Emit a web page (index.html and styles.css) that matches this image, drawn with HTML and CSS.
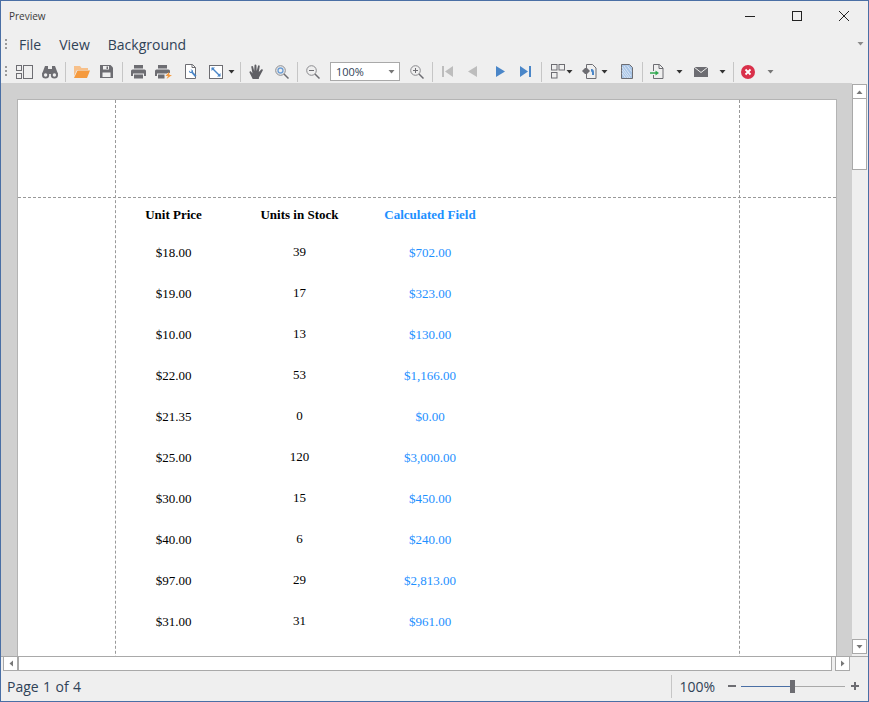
FILE: index.html
```html
<!DOCTYPE html>
<html lang="en">
<head>
<meta charset="utf-8">
<title>Preview</title>
<link rel="stylesheet" href="styles.css">
</head>
<body>
<div class="window">
  <header class="titlebar">
    <span class="title">Preview</span>
    <div class="winbtns">
      <button class="winbtn"><svg width="12" height="12" viewBox="0 0 12 12"><path d="M1 6.5h10" stroke="#222" fill="none"/></svg></button>
      <button class="winbtn"><svg width="12" height="12" viewBox="0 0 12 12"><rect x="1.5" y="1.5" width="9" height="9" stroke="#222" fill="none"/></svg></button>
      <button class="winbtn"><svg width="12" height="12" viewBox="0 0 12 12"><path d="M1 1l10 10M11 1L1 11" stroke="#222" fill="none"/></svg></button>
    </div>
  </header>
  <nav class="menubar">
    <span class="grip"></span>
    <span class="menuitem m-file">File</span>
    <span class="menuitem m-view">View</span>
    <span class="menuitem">Background</span>
    <span class="spring"></span>
    <svg class="menucaret" width="7" height="4" viewBox="0 0 7 4"><path d="M.5 0h6L3.500 3.500z" fill="#8a8a8a"/></svg>
  </nav>
  <div class="toolbar">
    <span class="grip"></span>
    <span class="tool t1"><svg width="17" height="14" viewBox="0 0 17 14"><g fill="none" stroke="#6d6d72"><rect x=".5" y=".5" width="5" height="5"/><rect x=".5" y="8.5" width="5" height="5"/><rect x="7.5" y=".5" width="9" height="13"/></g></svg></span>
    <span class="tool"><svg width="16" height="14" viewBox="0 0 16 14"><g fill="#6d6d72"><path d="M3 1h3v3h4V1h3l3 8H0z"/><circle cx="3.6" cy="10" r="3.6"/><circle cx="12.4" cy="10" r="3.6"/></g><circle cx="3.6" cy="10" r="1.7" fill="#efefef"/><circle cx="12.4" cy="10" r="1.7" fill="#efefef"/></svg></span>
    <span class="sep"></span>
    <span class="tool"><svg width="16" height="13" viewBox="0 0 16 13"><path d="M0 1h6l1.500 2H14v2H3L0 11z" fill="#f7c08a"/><path d="M3.500 5.500H16L13 13H0z" fill="#f59a3e"/></svg></span>
    <span class="tool"><svg width="13" height="13" viewBox="0 0 13 13"><path d="M0 0h10.500L13 2.500V13H0z" fill="#6d6d72"/><rect x="3" y="1" width="6" height="3.500" fill="#efefef"/><rect x="6.500" y="1.500" width="1.500" height="2.500" fill="#6d6d72"/><rect x="2.500" y="7.500" width="8" height="4.500" fill="#efefef"/></svg></span>
    <span class="sep"></span>
    <span class="tool"><svg width="15" height="14" viewBox="0 0 15 14"><path d="M3 0h9v3.500H3z" fill="#6d6d72"/><path d="M1.500 4.500h12A1.500 1.500 0 0 1 15 6v5h-2V8.500H2V11H0V6a1.500 1.500 0 0 1 1.500-1.500z" fill="#6d6d72"/><rect x="3" y="9.500" width="9" height="4" fill="#6d6d72"/></svg></span>
    <span class="tool"><svg width="17" height="14" viewBox="0 0 17 14"><path d="M3 0h9v3.500H3z" fill="#6d6d72"/><path d="M1.500 4.500h12A1.500 1.500 0 0 1 15 6v2h-3v.5H2V11H0V6a1.500 1.500 0 0 1 1.500-1.500z" fill="#6d6d72"/><rect x="3" y="9.500" width="6.500" height="4" fill="#6d6d72"/><path d="M14 7l-3.500 4H13l-1.500 3L17 10h-2.500z" fill="#f59a3e"/></svg></span>
    <span class="tool t-c"><svg width="14" height="15" viewBox="0 0 14 15"><path d="M1.500.5h7L11.500 3.500V14.500H1.500z" fill="#fff" stroke="#6d6d72"/><path d="M8 .5v3h3.500" fill="none" stroke="#6d6d72"/><path d="M5 6.500a2 2 0 0 0 2.500 2.500L11 13l1.500-1.500L9 8a2 2 0 0 0-2.500-2.500L8 7 6.500 8z" fill="#4a86c8"/></svg></span>
    <span class="tool"><svg width="14" height="14" viewBox="0 0 14 14"><rect x=".5" y=".5" width="13" height="13" fill="#fff" stroke="#6d6d72"/><path d="M3 3l8 8" stroke="#4a86c8" stroke-width="1.400"/><path d="M2.500 2.500h3.500L2.500 6zM11.500 11.500H8L11.500 8z" fill="#4a86c8"/></svg></span>
    <svg class="caret c-d" width="7" height="4" viewBox="0 0 7 4"><path d="M.5 0h6L3.500 3.500z" fill="#333"/></svg>
    <span class="sep s-hand"></span>
    <span class="tool"><svg width="16" height="16" viewBox="0 0 16 16"><path d="M3.700 15L.5 8.500c-.4-1 1-1.700 1.700-.7L3.500 9.500 2.300 3c-.2-1.100 1.500-1.500 1.800-.3L5.200 7 5.500 1.300c0-1.200 1.800-1.200 1.900 0L7.700 7 9 2c.3-1.100 2-.8 1.700.4L9.800 8l2.400-2.400c.9-.9 2.200.2 1.400 1.200L10 13.500 9.800 15z" fill="#5f5f64"/></svg></span>
    <span class="tool"><svg width="14" height="14" viewBox="0 0 14 14"><circle cx="5.500" cy="5.500" r="4.800" fill="none" stroke="#8a8a8e"/><circle cx="5.500" cy="5.500" r="2.500" fill="none" stroke="#6f9fd4" stroke-width="1.400"/><path d="M9 9l4.500 4.500" stroke="#6d6d72" stroke-width="1.500"/></svg></span>
    <span class="sep"></span>
    <span class="tool t-zo"><svg width="14" height="14" viewBox="0 0 14 14"><circle cx="5.500" cy="5.500" r="4.800" fill="none" stroke="#8a8a8e"/><path d="M3 5.500h5" stroke="#6d6d72"/><path d="M9 9l4.500 4.500" stroke="#6d6d72" stroke-width="1.500"/></svg></span>
    <span class="combo"><span class="comboval">100%</span><svg width="7" height="4" viewBox="0 0 7 4"><path d="M.5 0h6L3.500 3.500z" fill="#777"/></svg></span>
    <span class="tool"><svg width="14" height="14" viewBox="0 0 14 14"><circle cx="5.500" cy="5.500" r="4.800" fill="none" stroke="#8a8a8e"/><path d="M3 5.500h5M5.500 3v5" stroke="#6d6d72"/><path d="M9 9l4.500 4.500" stroke="#6d6d72" stroke-width="1.500"/></svg></span>
    <span class="sep"></span>
    <span class="tool t-first"><svg width="11" height="11" viewBox="0 0 11 11"><path d="M0 0h2v11H0zM11 0v11L3 5.500z" fill="#bdbdbd"/></svg></span>
    <span class="tool"><svg width="9" height="11" viewBox="0 0 9 11"><path d="M9 0v11L0 5.500z" fill="#bdbdbd"/></svg></span>
    <span class="tool t-next"><svg width="9" height="11" viewBox="0 0 9 11"><path d="M0 0v11l9-5.500z" fill="#4a86c8"/></svg></span>
    <span class="tool"><svg width="11" height="11" viewBox="0 0 11 11"><path d="M9 0h2v11H9zM0 0v11l8-5.500z" fill="#4a86c8"/></svg></span>
    <span class="sep"></span>
    <span class="tool"><svg width="14" height="15" viewBox="0 0 14 15"><g fill="none" stroke="#6d6d72"><rect x=".5" y=".5" width="5.500" height="5.500"/><rect x="8" y=".5" width="5.500" height="5.500"/><rect x=".5" y="8.500" width="5.500" height="5.500"/></g></svg></span>
    <svg class="caret c-e" width="7" height="4" viewBox="0 0 7 4"><path d="M.5 0h6L3.500 3.500z" fill="#333"/></svg>
    <span class="tool t-f"><svg width="15" height="15" viewBox="0 0 15 15"><path d="M4.500 4V.5h6l3.500 3.500v10.500H4.500V10" fill="none" stroke="#6d6d72"/><path d="M0 7l3-3h2l3 3-3 3H3z" fill="#6d6d72"/><path d="M9 5c2-.5 3 1 3 3.500v2.500h-2V9c0-1-.5-1.500-1-1.500z" fill="#4a86c8"/></svg></span>
    <svg class="caret c-f" width="7" height="4" viewBox="0 0 7 4"><path d="M.5 0h6L3.500 3.500z" fill="#333"/></svg>
    <span class="tool"><svg width="12" height="15" viewBox="0 0 12 15"><path d="M.5.500h8l3 3v11H.5z" fill="#a9c5e6" stroke="#6d6d72"/><path d="M1 3l8 11M1 6l6 8M1 9l3.500 5M3 2l7 10M6 1.500l4.500 6" stroke="#e6eef7" stroke-width=".8" fill="none"/></svg></span>
    <span class="sep"></span>
    <span class="tool t-h"><svg width="15" height="15" viewBox="0 0 15 15"><path d="M3.500 7V.5h6l3.500 3.500v10.500H3.500V11" fill="none" stroke="#6d6d72"/><path d="M9 .5v4h4" fill="none" stroke="#6d6d72"/><path d="M0 9h6" stroke="#2fa84f" stroke-width="1.500"/><path d="M5.500 6.500L9 9l-3.500 2.500z" fill="#2fa84f"/></svg></span>
    <svg class="caret c-h" width="7" height="4" viewBox="0 0 7 4"><path d="M.5 0h6L3.500 3.500z" fill="#333"/></svg>
    <span class="tool"><svg width="14" height="10" viewBox="0 0 14 10"><path d="M0 0h14v10H0z" fill="#6d6d72"/><path d="M0 0l7 5.500L14 0" fill="none" stroke="#efefef"/></svg></span>
    <svg class="caret c-i" width="7" height="4" viewBox="0 0 7 4"><path d="M.5 0h6L3.500 3.500z" fill="#333"/></svg>
    <span class="sep"></span>
    <span class="tool t-j"><svg width="14" height="14" viewBox="0 0 14 14"><circle cx="7" cy="7" r="7" fill="#d9304a"/><path d="M4.500 4.500l5 5M9.500 4.500l-5 5" stroke="#fff" stroke-width="1.800"/></svg></span>
    <svg class="caret c-j" width="7" height="4" viewBox="0 0 7 4"><path d="M.5 0h6L3.500 3.500z" fill="#777"/></svg>
  </div>
  <main class="viewer">
    <div class="canvas">
      <section class="page">
        <span class="guide g-left"></span>
        <span class="guide g-right"></span>
        <span class="guide g-top"></span>
        <div class="report">
          <div class="row head"><span>Unit Price</span><span class="units">Units in Stock</span><span class="calc">Calculated Field</span></div>
          <div class="row"><span>$18.00</span><span class="units">39</span><span class="calc">$702.00</span></div>
          <div class="row"><span>$19.00</span><span class="units">17</span><span class="calc">$323.00</span></div>
          <div class="row"><span>$10.00</span><span class="units">13</span><span class="calc">$130.00</span></div>
          <div class="row"><span>$22.00</span><span class="units">53</span><span class="calc">$1,166.00</span></div>
          <div class="row"><span>$21.35</span><span class="units">0</span><span class="calc">$0.00</span></div>
          <div class="row"><span>$25.00</span><span class="units">120</span><span class="calc">$3,000.00</span></div>
          <div class="row"><span>$30.00</span><span class="units">15</span><span class="calc">$450.00</span></div>
          <div class="row"><span>$40.00</span><span class="units">6</span><span class="calc">$240.00</span></div>
          <div class="row"><span>$97.00</span><span class="units">29</span><span class="calc">$2,813.00</span></div>
          <div class="row"><span>$31.00</span><span class="units">31</span><span class="calc">$961.00</span></div>
        </div>
      </section>
    </div>
    <div class="vscroll">
      <span class="sbtn"><svg width="7" height="4" viewBox="0 0 7 4"><path d="M.5 4h6L3.500 .5z" fill="#777"/></svg></span>
      <span class="vthumb"></span>
      <span class="spring"></span>
      <span class="sbtn"><svg width="7" height="4" viewBox="0 0 7 4"><path d="M.5 0h6L3.500 3.500z" fill="#777"/></svg></span>
    </div>
  </main>
  <div class="hscroll">
    <span class="hbtn"><svg width="4" height="7" viewBox="0 0 4 7"><path d="M4 .5v6L.5 3.500z" fill="#777"/></svg></span>
    <span class="hthumb"></span>
    <span class="hbtn"><svg width="4" height="7" viewBox="0 0 4 7"><path d="M0 .5v6l3.500-3z" fill="#777"/></svg></span>
  </div>
  <footer class="status">
    <span class="pageinfo">Page 1 of 4</span>
    <span class="spring"></span>
    <span class="statsep"></span>
    <span class="zoomval">100%</span>
    <span class="zminus"></span>
    <span class="slider"><span class="track-on"></span><span class="thumb"></span><span class="track-off"></span></span>
    <span class="zplus"></span>
  </footer>
</div>
</body>
</html>
```

FILE: styles.css
```css
* { box-sizing: border-box; }
html, body { margin: 0; padding: 0; }
body { width: 869px; height: 702px; overflow: hidden; font-family: "Open Sans", "Noto Sans", sans-serif; color: #333; }
svg { display: block; flex: none; }
.spring { flex: 1; }

.window { width: 869px; height: 702px; background: #efefef; border: 1px solid #4a6fa5; display: flex; flex-direction: column; }

.titlebar { height: 29px; flex: none; display: flex; align-items: center; padding-left: 8px; }
.title { font-size: 10px; color: #3a3a3a; }
.winbtns { margin-left: auto; display: flex; padding-right: 1px; }
.winbtn { width: 47px; height: 29px; border: 0; padding: 0; background: none; display: flex; align-items: center; justify-content: center; }

.menubar { height: 30px; flex: none; display: flex; align-items: center; padding: 0 4px 2px; }
.grip { width: 2px; height: 11px; flex: none; background: repeating-linear-gradient(#9a9a9a 0 2px, transparent 2px 4px); }
.menuitem { font-size: 14px; color: #2f4257; }
.menubar .grip { margin-right: 12px; }
.m-file { margin-right: 18px; }
.m-view { margin-right: 18px; }

.toolbar { height: 23px; flex: none; display: flex; align-items: center; padding-left: 4px; }
.toolbar .grip { margin-right: 5px; }
.tool { width: 25px; height: 22px; flex: none; display: flex; align-items: center; justify-content: center; }
.sep { width: 1px; height: 20px; flex: none; background: #c6c6c6; margin: 0 3px; }
.caret { flex: none; }
.t-c { margin-left: 2px; }
.c-d { margin-right: 2px; }
.s-hand { margin-left: 3px; }
.t-zo { margin-left: -1px; }
.combo { width: 70px; height: 19px; flex: none; background: #fff; border: 1px solid #a9a9a9; display: flex; align-items: center; justify-content: space-between; padding: 0 4px 0 5px; margin: 0 4px 0 5px; }
.comboval { font-size: 11px; color: #2f4257; }
.t-first { margin-left: -1px; }
.t-next { margin-left: 3px; }
.c-e { margin-left: -4px; margin-right: 3px; }
.t-f { margin-left: 1px; }
.c-f { margin-left: -1px; margin-right: 6px; }
.t-h { margin-left: -1px; }
.c-h { margin-left: 6px; margin-right: 5px; }
.c-i { margin-left: 6px; margin-right: 4px; }
.t-j { margin-left: -2px; }
.c-j { margin-left: 7px; }

.viewer { flex: 1; min-height: 0; display: flex; background: #d0d0d0; }
.canvas { flex: 1; min-width: 0; padding: 16px 15px 0 16px; overflow: hidden; }
.page { position: relative; height: 700px; background: #fff; border: 1px solid #b4b4b4; border-bottom: 0; font-family: "Liberation Serif", serif; font-size: 13px; color: #000; }
.guide { position: absolute; }
.g-left, .g-right { top: 0; bottom: 0; width: 0; border-left: 1px dashed #999; }
.g-left { left: 97px; }
.g-right { left: 721px; }
.g-top { left: 0; right: 0; top: 97px; height: 0; border-top: 1px dashed #999; }
.report { padding: 98px 0 0 98px; }
.row { display: grid; grid-template-columns: 115px 137px 124px; height: 41px; padding-top: 15px; text-align: center; line-height: 14px; }
.row .units { margin-top: -1px; }
.head { height: 33px; padding-top: 10px; font-weight: 700; }
.head .units { margin-top: 0; }
.calc { color: #1e90ff; }

.vscroll { width: 16px; flex: none; background: #efefef; display: flex; flex-direction: column; padding-bottom: 2px; }
.sbtn { width: 15px; height: 15px; margin-top: 1px; background: #fff; border: 1px solid #a9a9a9; display: flex; align-items: center; justify-content: center; flex: none; }
.vthumb { width: 15px; height: 71px; background: #fff; border: 1px solid #a9a9a9; border-top: 0; flex: none; }

.hscroll { height: 15px; flex: none; display: flex; align-items: center; padding: 0 18px 0 2px; background: #efefef; border-top: 1px solid #a9a9a9; }
.hbtn { width: 15px; height: 14px; background: #fff; border: 1px solid #a9a9a9; border-top: 0; display: flex; align-items: center; justify-content: center; flex: none; }
.hthumb { flex: 1; height: 14px; background: #fff; border: 1px solid #a9a9a9; border-top: 0; margin-right: 3px; }

.status { height: 30px; flex: none; display: flex; align-items: center; padding: 0 9px 0 6px; }
.pageinfo { font-size: 14px; color: #2f4257; word-spacing: .8px; }
.statsep { width: 1px; height: 23px; background: #c6c6c6; margin-right: 7px; }
.zoomval { font-size: 14px; color: #2f4257; margin-right: 13px; }
.zminus { width: 8px; height: 2px; background: #6d6d72; margin-right: 5px; }
.slider { width: 104px; display: flex; align-items: center; margin-right: 6px; }
.track-on { width: 49px; height: 1px; background: #4a6fa5; }
.thumb { width: 5px; height: 13px; background: #6d6d72; }
.track-off { flex: 1; height: 1px; background: #a9a9a9; }
.zplus { width: 8px; height: 8px; background: linear-gradient(#6d6d72, #6d6d72) center / 8px 2px no-repeat, linear-gradient(#6d6d72, #6d6d72) center / 2px 8px no-repeat; }
```
